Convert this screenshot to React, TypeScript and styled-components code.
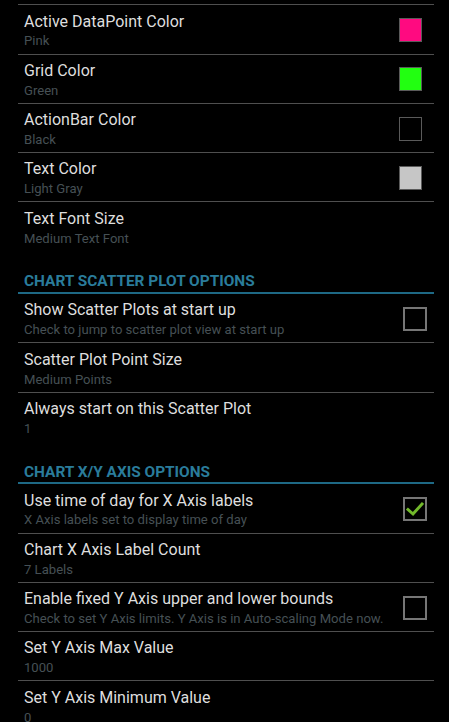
import React from "react";
import styled, { createGlobalStyle } from "styled-components";

const Global = createGlobalStyle`
  html, body {
    margin: 0;
    padding: 0;
    background: #000;
  }
  body {
    font-family: Roboto, "Noto Sans", "Liberation Sans", sans-serif;
    -webkit-font-smoothing: antialiased;
  }
`;

const Screen = styled.div`
  width: 449px;
  height: 722px;
  overflow: hidden;
  background: #000;
  padding: 4.3px 15px 0 18px;
  box-sizing: border-box;
`;

const Divider = styled.div`
  height: 1px;
  background: #4f4f4f;
`;

const Row = styled.div<{ $last?: boolean }>`
  display: flex;
  align-items: center;
  height: 48.3px;
  box-sizing: content-box;
  padding-left: 6px;
  border-bottom: 1px solid ${(p) => (p.$last ? "transparent" : "#4f4f4f")};
`;

const Texts = styled.div`
  flex: 1;
  min-width: 0;
  align-self: flex-start;
  display: flex;
  flex-direction: column;
  padding-top: 6.3px;
`;

const Title = styled.div`
  font-size: 16px;
  line-height: 20px;
  color: #dedede;
  white-space: nowrap;
`;

const Summary = styled.div`
  font-size: 13.1px;
  line-height: 16px;
  margin-top: 1.9px;
  color: #465055;
  white-space: nowrap;
`;

const Swatch = styled.div<{ $color: string }>`
  width: 21px;
  height: 22px;
  margin-right: 12px;
  margin-top: 1px;
  background: ${(p) => p.$color};
  border: 1.5px solid #5a5a5a;
`;

const Check = styled.div`
  width: 20px;
  height: 20px;
  margin-right: 7px;
  margin-top: 1px;
  border: 2px solid #767676;
  display: flex;
  align-items: center;
  justify-content: center;
`;

const Header = styled.div`
  height: 42.3px;
  box-sizing: border-box;
  padding: 21.7px 0 0 6px;
  border-bottom: 2px solid #1e6985;
  font-size: 15.4px;
  font-weight: 700;
  line-height: 16px;
  color: #2a7c9b;
`;

type Item = {
  title: string;
  summary: string;
  swatch?: string;
  check?: boolean | "on";
  last?: boolean;
};

const CheckMark = () => (
  <svg width="18" height="16" viewBox="0 0 18 16">
    <path
      d="M2 8.5 L7 13 L16 3"
      fill="none"
      stroke="#72b92b"
      strokeWidth="3"
      strokeLinecap="square"
    />
  </svg>
);

const PrefRow = ({ item }: { item: Item }) => (
  <Row $last={item.last}>
    <Texts>
      <Title>{item.title}</Title>
      <Summary>{item.summary}</Summary>
    </Texts>
    {item.swatch && <Swatch $color={item.swatch} />}
    {item.check !== undefined && (
      <Check>{item.check === "on" && <CheckMark />}</Check>
    )}
  </Row>
);

const section1: Item[] = [
  { title: "Active DataPoint Color", summary: "Pink", swatch: "#ff0a80" },
  { title: "Grid Color", summary: "Green", swatch: "#22ff11" },
  { title: "ActionBar Color", summary: "Black", swatch: "#000" },
  { title: "Text Color", summary: "Light Gray", swatch: "#c6c6c6" },
  { title: "Text Font Size", summary: "Medium Text Font", last: true },
];

const section2: Item[] = [
  {
    title: "Show Scatter Plots at start up",
    summary: "Check to jump to scatter plot view at start up",
    check: true,
  },
  { title: "Scatter Plot Point Size", summary: "Medium Points" },
  { title: "Always start on this Scatter Plot", summary: "1", last: true },
];

const section3: Item[] = [
  {
    title: "Use time of day for X Axis labels",
    summary: "X Axis labels set to display time of day",
    check: "on",
  },
  { title: "Chart X Axis Label Count", summary: "7 Labels" },
  {
    title: "Enable fixed Y Axis upper and lower bounds",
    summary: "Check to set Y Axis limits. Y Axis is in Auto-scaling Mode now.",
    check: true,
  },
  { title: "Set Y Axis Max Value", summary: "1000" },
  { title: "Set Y Axis Minimum Value", summary: "0" },
];

export default function App() {
  return (
    <>
      <Global />
      <Screen>
        <Divider />
        {section1.map((it) => (
          <PrefRow key={it.title} item={it} />
        ))}
        <Header>CHART SCATTER PLOT OPTIONS</Header>
        {section2.map((it) => (
          <PrefRow key={it.title} item={it} />
        ))}
        <Header>CHART X/Y AXIS OPTIONS</Header>
        {section3.map((it) => (
          <PrefRow key={it.title} item={it} />
        ))}
      </Screen>
    </>
  );
}
